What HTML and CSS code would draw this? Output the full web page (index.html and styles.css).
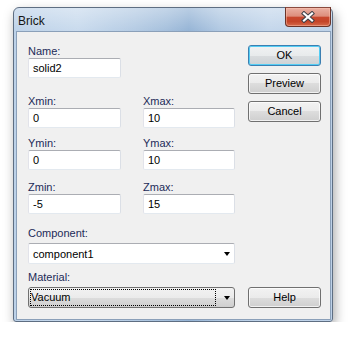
FILE: index.html
```html
<!DOCTYPE html>
<html>
<head>
<meta charset="utf-8">
<link rel="stylesheet" href="styles.css">
</head>
<body>
<div class="window">
  <div class="titlebar">
    <span class="title">Brick</span>
    <div class="close">
      <svg width="14" height="12" viewBox="0 0 14 12">
        <path d="M3 2.5 L11 9.5 M11 2.5 L3 9.5" stroke="#404048" stroke-width="4.2" stroke-linecap="square" fill="none"/>
        <path d="M3 2.5 L11 9.5 M11 2.5 L3 9.5" stroke="#ffffff" stroke-width="2.2" stroke-linecap="square" fill="none"/>
      </svg>
    </div>
  </div>
  <div class="client">
    <div class="form">
      <div class="field">
        <div class="lbl">Name:</div>
        <div class="input name">solid2</div>
      </div>
      <div class="pair row-x">
        <div class="field"><div class="lbl">Xmin:</div><div class="input">0</div></div>
        <div class="field"><div class="lbl">Xmax:</div><div class="input">10</div></div>
      </div>
      <div class="pair row-y">
        <div class="field"><div class="lbl">Ymin:</div><div class="input">0</div></div>
        <div class="field"><div class="lbl">Ymax:</div><div class="input">10</div></div>
      </div>
      <div class="pair row-z">
        <div class="field"><div class="lbl">Zmin:</div><div class="input">-5</div></div>
        <div class="field"><div class="lbl">Zmax:</div><div class="input">15</div></div>
      </div>
      <div class="field row-comp">
        <div class="lbl combo-lbl">Component:</div>
        <div class="combo"><span class="combo-text">component1</span><span class="arrow"></span></div>
      </div>
      <div class="field row-mat">
        <div class="lbl combo-lbl">Material:</div>
        <div class="combo dropdown"><span class="focus">Vacuum</span><span class="arrow"></span></div>
      </div>
    </div>
    <div class="buttons">
      <div class="btn default">OK</div>
      <div class="btn">Preview</div>
      <div class="btn">Cancel</div>
      <div class="btn help">Help</div>
    </div>
  </div>
</div>
</body>
</html>
```
FILE: styles.css
```css
html, body {
  margin: 0;
  background: #ffffff;
}
body {
  padding: 7px 0 0 13px;
  font-family: "Liberation Sans", Arial, sans-serif;
  font-size: 11px;
}
.window {
  width: 320px;
  height: 315px;
  box-sizing: border-box;
  border: 1px solid #5e6e82;
  border-radius: 6px 6px 3px 3px;
  background:
    linear-gradient(to bottom, rgba(255,255,255,0.35), rgba(255,255,255,0) 24px),
    linear-gradient(to right, #bcd1e8 0%, #c8daed 20%, #b3cae3 38%, #a4bfdc 48%, #94b3d5 55%, #b0c8e2 65%, #c3d6eb 80%, #bdd1e8 100%);
  padding: 0 1px 1px 2px;
  display: flex;
  flex-direction: column;
  box-shadow: 2px 5px 12px rgba(0, 0, 0, 0.35);
}
.titlebar {
  height: 23px;
  display: flex;
  justify-content: space-between;
  align-items: flex-start;
}
.title {
  padding: 6px 0 0 2px;
  font-size: 12px;
  line-height: 14px;
  color: #141414;
}
.close {
  width: 46px;
  height: 20px;
  margin-top: -1px;
  box-sizing: border-box;
  border: 1px solid #6b3328;
  border-top-color: #8a4a3e;
  border-radius: 0 0 4px 4px;
  background: linear-gradient(to bottom, #eab0a2 0%, #dd8e7c 45%, #c8472d 52%, #c44529 75%, #d66a4b 100%);
  box-shadow: inset 0 0 0 1px rgba(255, 200, 180, 0.45);
  display: flex;
  align-items: center;
  justify-content: center;
}
.close svg {
  display: block;
}
.client {
  flex: 1;
  background: #f0f0f0;
  border: 1px solid #8ba0b9;
  display: flex;
  align-items: stretch;
  gap: 13px;
  padding: 12px 0 11px 11px;
  min-height: 0;
}
.form {
  width: 207px;
  display: flex;
  flex-direction: column;
}
.lbl {
  line-height: 14px;
  color: #1c2b58;
}
.combo-lbl {
  margin-bottom: 3px;
}
.input {
  height: 20px;
  box-sizing: border-box;
  border: 1px solid;
  border-color: #abadb3 #dbdfe6 #e3e9ef #e2e3ea;
  border-radius: 2px;
  background: #ffffff;
  padding-left: 4px;
  line-height: 18px;
  color: #000000;
}
.input.name {
  width: 93px;
}
.pair {
  display: grid;
  grid-template-columns: 93px 92px;
  column-gap: 22px;
}
.row-x { margin-top: 16px; }
.row-y { margin-top: 8px; }
.row-z { margin-top: 10px; }
.row-comp { margin-top: 12px; }
.row-mat { margin-top: 6px; }
.combo {
  height: 21px;
  box-sizing: border-box;
  border: 1px solid;
  border-color: #abadb3 #dbdfe6 #e3e9ef #e2e3ea;
  border-radius: 2px;
  background: #ffffff;
  display: flex;
  align-items: center;
  color: #000000;
}
.combo-text {
  padding-left: 4px;
  flex: 1;
}
.arrow {
  width: 0;
  height: 0;
  border-left: 3.5px solid transparent;
  border-right: 3.5px solid transparent;
  border-top: 4px solid #000000;
  margin-right: 4px;
}
.combo.dropdown {
  border: 1px solid #707070;
  border-radius: 3px;
  background: linear-gradient(to bottom, #f2f2f2 0%, #ebebeb 50%, #dddddd 50%, #cfcfcf 100%);
  padding: 1px 0 1px 1px;
}
.focus {
  box-sizing: border-box;
  width: 186px;
  height: 17px;
  border: 1px dotted #000000;
  line-height: 15px;
  padding-left: 0;
  margin-right: auto;
  color: #000000;
}
.buttons {
  width: 73px;
  display: flex;
  flex-direction: column;
  gap: 7px;
  padding-top: 1px;
}
.btn {
  height: 21px;
  box-sizing: border-box;
  border: 1px solid #707070;
  border-radius: 3px;
  background: linear-gradient(to bottom, #f2f2f2 0%, #ebebeb 50%, #dddddd 50%, #cfcfcf 100%);
  box-shadow: inset 0 0 0 1px rgba(255, 255, 255, 0.7);
  text-align: center;
  line-height: 19px;
  color: #000000;
}
.btn.default {
  border-color: #3c7fb1;
  box-shadow: inset 0 0 0 1px #54cdf4;
  background: linear-gradient(to bottom, #f0f2f3 0%, #e8ebec 50%, #dadddf 50%, #cdd2d5 100%);
}
.btn.help {
  margin-top: auto;
}
```
